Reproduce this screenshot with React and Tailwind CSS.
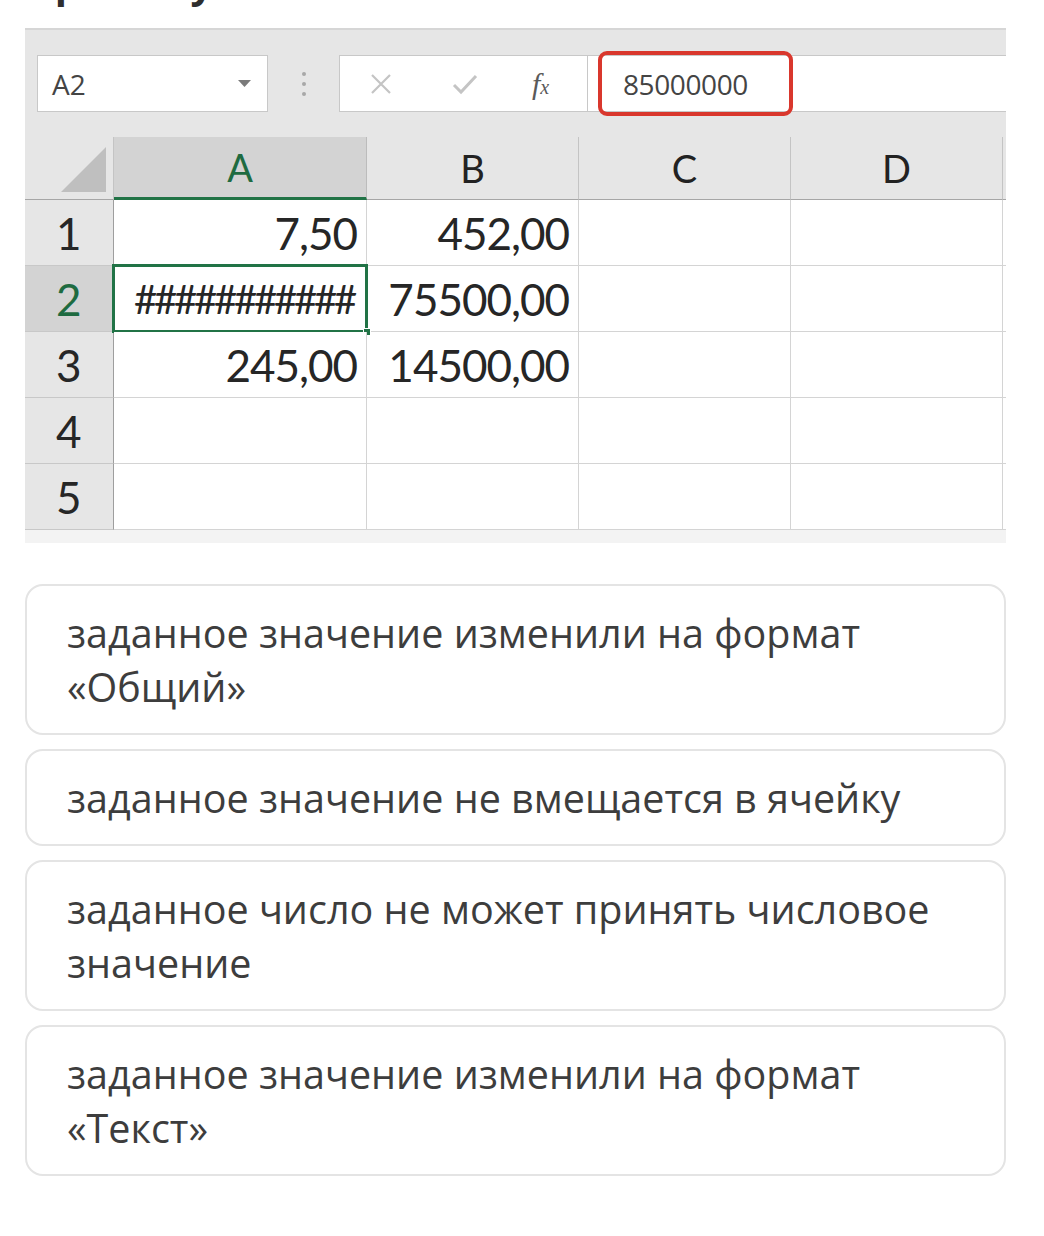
import React from 'react';

const rows = [
  { n: '1', a: '7,50', b: '452,00' },
  { n: '2', a: '###########', b: '75500,00', selected: true },
  { n: '3', a: '245,00', b: '14500,00' },
  { n: '4', a: '', b: '' },
  { n: '5', a: '', b: '' },
];

const answers = [
  'заданное значение изменили на формат «Общий»',
  'заданное значение не вмещается в ячейку',
  'заданное число не может принять числовое значение',
  'заданное значение изменили на формат «Текст»',
];

const Toolbar = () => (
  <div className="flex items-start h-[109px] border-t-2 border-[#d6d6d6] pl-[12px] pt-[25px]">
    {/* Name box */}
    <div className="flex items-center justify-between w-[231px] h-[57px] bg-white border border-[#c8c8c8] pl-[14px] pr-[16px]">
      <span className="text-[28px] text-[#444] font-['Open_Sans']">A2</span>
      <svg width="13" height="8" viewBox="0 0 13 8">
        <polygon points="0,0 13,0 6.5,7" fill="#7a7a7a" />
      </svg>
    </div>
    {/* dots */}
    <div className="flex flex-col gap-[6px] w-[71px] h-[57px] items-center justify-center">
      <span className="w-[4px] h-[4px] rounded-full bg-[#a8a8a8]" />
      <span className="w-[4px] h-[4px] rounded-full bg-[#a8a8a8]" />
      <span className="w-[4px] h-[4px] rounded-full bg-[#a8a8a8]" />
    </div>
    {/* formula bar */}
    <div className="flex flex-1 h-[57px] bg-white border border-r-0 border-[#c8c8c8]">
      <div className="flex items-center w-[248px] border-r border-[#c8c8c8]">
        <svg className="ml-[30px]" width="22" height="22" viewBox="0 0 22 22">
          <path d="M2 2 L20 20 M20 2 L2 20" stroke="#c4c4c4" strokeWidth="2.2" />
        </svg>
        <svg className="ml-[60px]" width="26" height="22" viewBox="0 0 26 22">
          <path d="M2 12 L9 19 L24 3" stroke="#c4c4c4" strokeWidth="3" fill="none" />
        </svg>
        <span className="ml-[54px] font-['Liberation_Serif'] italic text-[#5a5a5a] text-[30px] leading-none">
          f<span className="text-[20px]">x</span>
        </span>
      </div>
      <div className="flex items-center pl-[10px]">
        <div className="flex items-center shrink-0 w-[195px] h-[65px] border-[4px] border-[#d9372d] rounded-[9px] pl-[21px]">
          <span className="text-[28px] text-[#444] font-['Open_Sans'] tracking-[-0.4px]">85000000</span>
        </div>
      </div>
    </div>
  </div>
);

const Grid = () => (
  <div className="grid grid-cols-[89px_253px_212px_212px_212px_3px] font-['Lato']">
    {/* header row */}
    <div className="h-[63px] flex items-end justify-end pr-[7px] pb-[7px] border-b border-[#a6a6a6] border-r border-r-[#c4c4c4]">
      <svg width="45" height="45" viewBox="0 0 45 45">
        <polygon points="45,0 45,45 0,45" fill="#bfbfbf" />
      </svg>
    </div>
    <div className="h-[63px] flex items-center justify-center bg-[#d3d3d3] border-b-[3px] border-[#217346] border-r border-r-[#bcbcbc] text-[38px] text-[#1e6b41]">A</div>
    <div className="h-[63px] flex items-center justify-center border-b border-[#a6a6a6] border-r border-r-[#c4c4c4] text-[38px] text-[#222]">B</div>
    <div className="h-[63px] flex items-center justify-center border-b border-[#a6a6a6] border-r border-r-[#c4c4c4] text-[38px] text-[#222]">C</div>
    <div className="h-[63px] flex items-center justify-center border-b border-[#a6a6a6] border-r border-r-[#c4c4c4] text-[38px] text-[#222]">D</div>
    <div className="h-[63px] border-b border-[#a6a6a6]" />

    {rows.map((r) => (
      <React.Fragment key={r.n}>
        <div
          className={
            r.selected
              ? 'h-[66px] flex items-center pl-[31px] bg-[#d3d3d3] border-b border-[#c8c8c8] border-r border-r-[#9e9e9e] text-[44px] text-[#1e6b41]'
              : 'h-[66px] flex items-center pl-[31px] bg-[#e6e6e6] border-b border-[#c8c8c8] border-r border-r-[#9e9e9e] text-[44px] text-[#262626]'
          }
        >
          {r.n}
        </div>
        <div className="relative h-[66px] flex items-center justify-end pr-[9px] bg-white border-b border-r border-[#d4d4d4] text-[#262626] overflow-visible">
          {r.selected ? (
            <>
              <span className="text-[40px] tracking-[-3.2px] pr-[3px]">{r.a}</span>
              <div className="absolute -left-[2px] -top-[2px] -right-[2px] -bottom-[2px] border-[3px] border-[#217346]" />
              <div className="absolute -right-[5px] -bottom-[5px] w-[8px] h-[8px] bg-[#217346] border border-white" />
            </>
          ) : (
            <span className="text-[44px] tracking-[-1px]">{r.a}</span>
          )}
        </div>
        <div className="h-[66px] flex items-center justify-end pr-[9px] bg-white border-b border-r border-[#d4d4d4] text-[44px] tracking-[-1px] text-[#262626]">
          {r.b}
        </div>
        <div className="h-[66px] bg-white border-b border-r border-[#d4d4d4]" />
        <div className="h-[66px] bg-white border-b border-r border-[#d4d4d4]" />
        <div className="h-[66px] bg-white border-b border-[#d4d4d4]" />
      </React.Fragment>
    ))}
  </div>
);

const App = () => {
  return (
    <div className="min-h-[1236px] bg-white font-['Open_Sans',sans-serif]">
      {/* clipped question title */}
      <div className="h-[28px] overflow-hidden px-[25px]">
        <div className="-mt-[41px] text-[40px] leading-[48px] font-bold text-[#2e2e2e] whitespace-nowrap">
          Причину появления в ячейке A2 символов
        </div>
      </div>

      {/* spreadsheet picture */}
      <div className="ml-[25px] w-[981px] bg-[#e6e6e6]">
        <Toolbar />
        <Grid />
        <div className="h-[13px] bg-[#f3f3f3]" />
      </div>

      {/* answers */}
      <div className="ml-[25px] w-[981px] mt-[41px] flex flex-col gap-[14px]">
        {answers.map((a) => (
          <div key={a} className="border-2 border-[#e4e4e4] rounded-[18px] px-[40px] py-[19.5px] text-[39.5px] leading-[54px] text-[#3d3d3d]">
            {a}
          </div>
        ))}
      </div>
    </div>
  );
};

export default App;
